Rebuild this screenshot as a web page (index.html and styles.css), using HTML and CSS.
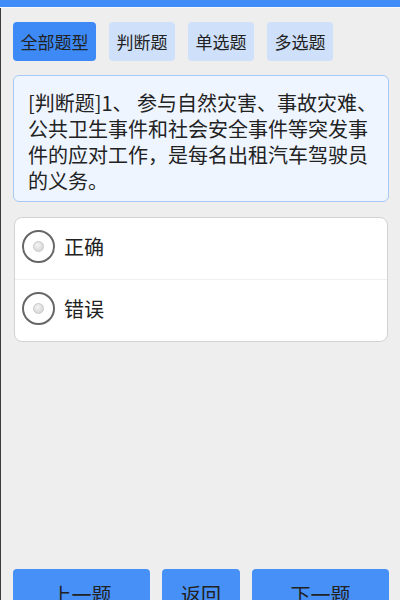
FILE: index.html
```html
<!DOCTYPE html>
<html>
<head>
    <meta charset="utf-8">
    <title>题库练习</title>
    <link rel="stylesheet" href="styles.css">
</head>
<body>
    <div id="top-bar"></div>

    <div id="page">
        <div id="type-tabs">
            <button class="tab active">全部题型</button>
            <button class="tab">判断题</button>
            <button class="tab">单选题</button>
            <button class="tab">多选题</button>
        </div>

        <div id="question-box">[判断题]1、 参与自然灾害、事故灾难、公共卫生事件和社会安全事件等突发事件的应对工作，是每名出租汽车驾驶员的义务。</div>

        <div id="options-card">
            <label class="option">
                <span class="radio"></span>
                <span class="option-text">正确</span>
            </label>
            <label class="option">
                <span class="radio"></span>
                <span class="option-text">错误</span>
            </label>
        </div>

        <div id="nav-buttons">
            <button class="nav-btn wide">上一题</button>
            <button class="nav-btn">返回</button>
            <button class="nav-btn wide">下一题</button>
        </div>
    </div>
</body>
</html>
```

FILE: styles.css
```css
html {
    overflow: hidden;
}

body {
    font-family: "Noto Sans CJK SC", "Noto Sans", sans-serif;
    margin: 0;
    background-color: #eeeeee;
    color: #222;
}

/* Blue strip at the very top */
#top-bar {
    height: 7px;
    background-color: #408cf8;
    border-bottom: 1px solid #f8f8f8;
}

#page {
    display: flex;
    flex-direction: column;
    min-height: 611px;
    border-left: 1px solid #3a3a3a;
}

/* Question type tabs */
#type-tabs {
    display: flex;
    gap: 13px;
    padding: 14px 0 0 12px;
}

.tab {
    height: 39px;
    padding: 0 7.5px;
    border: none;
    border-radius: 4px;
    background-color: #cfe0fb;
    color: #222;
    font-family: inherit;
    font-size: 17px;
}

.tab.active {
    background-color: #3d8af7;
}

/* Question text */
#question-box {
    margin: 14px 11px 0 12px;
    padding: 14px 8px 7px 14px;
    border: 1px solid #a9c9f5;
    border-radius: 6px;
    background-color: #eef5ff;
    font-size: 20px;
    line-height: 26px;
}

/* Answer options */
#options-card {
    margin: 15px 12px 0 13px;
    border: 1px solid #d2d2d2;
    border-radius: 8px;
    background-color: white;
    overflow: hidden;
}

.option {
    display: flex;
    align-items: center;
    height: 61px;
    padding-left: 7px;
}

.option + .option {
    border-top: 1px solid #efefef;
}

.radio {
    width: 29px;
    height: 29px;
    border: 2px solid #666;
    border-radius: 50%;
    display: flex;
    align-items: center;
    justify-content: center;
    margin-right: 9px;
    margin-top: -4px;
}

.radio::after {
    content: "";
    width: 9px;
    height: 9px;
    border-radius: 50%;
    border: 1px solid #c8c8c8;
    background: radial-gradient(circle at 40% 35%, #f4f4f4, #cfcfcf);
}

.option-text {
    font-size: 20px;
    margin-top: -4px;
}

/* Bottom navigation */
#nav-buttons {
    display: flex;
    gap: 12px;
    margin-top: auto;
    padding: 0 11px 0 12px;
}

.nav-btn {
    height: 50px;
    width: 78px;
    border: none;
    border-radius: 4px;
    background-color: #4690f7;
    color: #222;
    font-family: inherit;
    font-size: 20px;
}

.nav-btn.wide {
    flex: 1;
}
```
